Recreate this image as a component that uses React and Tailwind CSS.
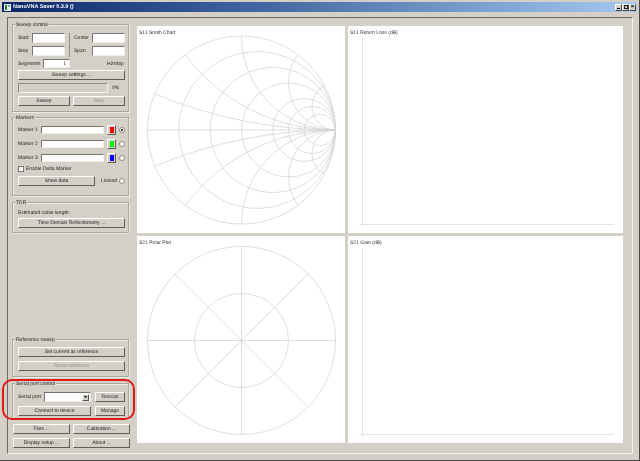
const ff = { fontFamily: '"Liberation Sans",Arial,sans-serif' };

function Btn({ children, className = "", disabled }) {
  return (
    <div className={"flex items-center justify-center pt-[1px] bg-[#d4d0c8] border border-t-white border-l-white border-r-[#5f5d58] border-b-[#5f5d58] text-[5px] leading-none whitespace-nowrap " + (disabled ? "text-[#8f8d88] " : "text-[#222222] ") + className}>
      {children}
    </div>
  );
}
function Input({ className = "", children }) {
  return (
    <div className={"bg-white border border-t-[#77756f] border-l-[#77756f] border-r-[#efeee9] border-b-[#efeee9] text-[5px] leading-none text-[#222222] flex items-center justify-end pt-[1px] pr-[3px] " + className}>
      {children}
    </div>
  );
}
function Group({ title, className = "", children }) {
  return (
    <fieldset className={"border border-[#a9a69c] shadow-[inset_1px_1px_0_#eeece6,1px_1px_0_#eeece6] w-[117px] pl-[5px] pr-[3px] " + className}>
      <legend className="-ml-[3px] px-[1px] translate-y-[1px] bg-[#d4d0c8] text-[5px] leading-[7px] text-[#222222]">{title}</legend>
      {children}
    </fieldset>
  );
}
function Label({ children, className = "" }) {
  return <span className={"pt-[1px] text-[5px] leading-none text-[#222222] whitespace-nowrap " + className}>{children}</span>;
}
function Radio({ on }) {
  return (
    <div className="w-[6px] h-[6px] rounded-full bg-white border border-[#8f8c84] flex items-center justify-center">
      {on && <div className="w-[2px] h-[2px] rounded-full bg-black" />}
    </div>
  );
}
function MarkerRow({ n, color, on }) {
  return (
    <div className="flex items-center h-[10px]">
      <Label className="w-[23px]">Marker {n}</Label>
      <Input className="w-[63px] h-[8px]" />
      <Btn className="w-[9px] h-[10px] ml-[3px] !pt-0">
        <div className={"w-[4px] h-[6px] " + color} />
      </Btn>
      <div className="ml-[3px]"><Radio on={on} /></div>
    </div>
  );
}
const GRID = "#d6d6d6";
function Chart({ title, children }) {
  return (
    <div className="bg-white relative">
      <div className="pl-[2px] pt-[4px] text-[5px] leading-[7px] text-[#333333]">{title}</div>
      {children}
    </div>
  );
}
function Smith() {
  const cx = 104.5, cy = 104, R = 94;
  const res = [5/12, 1/3, 1/4, 1/6, 1/8, 1/12];
  const im = [1, 0.5, 0.2, 2, 4];
  return (
    <svg className="absolute left-0 top-0" width="208" height="207" fill="none" stroke={GRID} strokeWidth="0.8">
      <defs><clipPath id="c"><circle cx={cx} cy={cy} r={R} /></clipPath></defs>
      <circle cx={cx} cy={cy} r={R} />
      <line x1={cx - R} y1={cy} x2={cx + R} y2={cy} />
      {res.map((f) => <circle key={f} cx={cx + R - 2 * R * f} cy={cy} r={2 * R * f} />)}
      <g clipPath="url(#c)">
        {im.map((x) => (
          <g key={x}>
            <circle cx={cx + R} cy={cy - R / x} r={R / x} />
            <circle cx={cx + R} cy={cy + R / x} r={R / x} />
          </g>
        ))}
      </g>
    </svg>
  );
}
function Polar() {
  const cx = 104.5, cy = 104.5, R = 94, d = R * Math.SQRT1_2;
  return (
    <svg className="absolute left-0 top-0" width="208" height="207" fill="none" stroke={GRID} strokeWidth="0.8">
      <circle cx={cx} cy={cy} r={R} />
      <circle cx={cx} cy={cy} r={R / 2} />
      <line x1={cx - R} y1={cy} x2={cx + R} y2={cy} />
      <line x1={cx} y1={cy - R} x2={cx} y2={cy + R} />
      <line x1={cx - d} y1={cy - d} x2={cx + d} y2={cy + d} />
      <line x1={cx - d} y1={cy + d} x2={cx + d} y2={cy - d} />
    </svg>
  );
}
function Axes() {
  return (
    <svg className="absolute left-0 top-0" width="275" height="207" fill="none" stroke="#dedede" strokeWidth="0.8">
      <line x1="14.5" y1="12" x2="14.5" y2="201" />
      <line x1="11" y1="198.5" x2="266" y2="198.5" />
    </svg>
  );
}

export default function App() {
  return (
    <div style={ff} className="relative w-[640px] h-[461px] overflow-hidden bg-[#d4d0c8] border-r border-b border-[#4a4a46] blur-[0.35px] [text-rendering:geometricPrecision]">
      <div className="mx-[2px] mt-[2px] h-[10px] flex items-center bg-gradient-to-r from-[#0a246a] to-[#a6caf0]">
        <svg className="ml-[2px]" width="7" height="7" viewBox="0 0 7 7">
          <rect width="7" height="7" fill="#e8f0e8" />
          <rect x="1" y="1" width="2" height="5" fill="#2f7f4f" />
          <rect x="4" y="1" width="2" height="2" fill="#7fa0c0" />
        </svg>
        <span className="ml-[2px] pt-[1px] text-[5.5px] font-bold leading-none text-white whitespace-nowrap">NanoVNA Saver 0.3.9 ()</span>
        <div className="ml-auto flex mr-[1px]">
          {["min", "max", "close"].map((k) => (
            <div key={k} className="w-[7px] h-[7px] bg-[#d4d0c8] border border-t-white border-l-white border-r-[#444444] border-b-[#444444] flex items-end justify-center">
              {k === "min" && <div className="w-[3px] h-[1px] bg-black mb-[1px]" />}
              {k === "max" && <div className="w-[4px] h-[4px] border border-[#222222] mb-[0.5px]" />}
              {k === "close" && <span className="text-[6px] font-bold leading-[5px] text-black">×</span>}
            </div>
          ))}
        </div>
      </div>

      <div className="ml-[7px] mt-[5px] w-[626px] h-[437px] border border-t-[#6e6c66] border-l-[#6e6c66] border-r-[#f2f1ec] border-b-[#f2f1ec] flex pl-[4px]">
        <div className="w-[118px] h-[427px] mt-[3px] flex flex-col">
          <Group title="Sweep control" className="h-[91px]">
            <div className="flex mt-[5px] h-[23px]">
              <div className="flex flex-col gap-[3px] w-[47px]">
                <div className="flex items-center"><Label className="w-[14px]">Start</Label><Input className="w-[33px] h-[10px]" /></div>
                <div className="flex items-center"><Label className="w-[14px]">Stop</Label><Input className="w-[33px] h-[10px]" /></div>
              </div>
              <div className="ml-[4px] w-[1px] h-[24px] bg-[#8d8a82]" />
              <div className="ml-[4px] flex flex-col gap-[3px] w-[51px]">
                <div className="flex items-center"><Label className="w-[18px]">Center</Label><Input className="w-[33px] h-[10px]" /></div>
                <div className="flex items-center"><Label className="w-[18px]">Span</Label><Input className="w-[33px] h-[10px]" /></div>
              </div>
            </div>
            <div className="flex items-center mt-[3px] h-[9px]">
              <Label className="w-[25px]">Segments</Label>
              <Input className="w-[27px] h-[9px]">1</Input>
              <Label className="ml-auto mr-[1px]">Hz/step</Label>
            </div>
            <Btn className="mt-[2px] h-[10px] w-[107px]">Sweep settings ...</Btn>
            <div className="flex items-center mt-[3px] h-[10px]">
              <div className="w-[90px] h-[10px] bg-[#d4d0c8] border border-t-[#8d8a82] border-l-[#8d8a82] border-r-[#f2f1ec] border-b-[#f2f1ec]" />
              <Label className="ml-[4px]">0%</Label>
            </div>
            <div className="flex gap-[3px] mt-[3px]">
              <Btn className="w-[52px] h-[10px]">Sweep</Btn>
              <Btn disabled className="w-[52px] h-[10px]">Stop</Btn>
            </div>
          </Group>

          <Group title="Markers" className="h-[82px] mt-[2px]">
            <div className="flex flex-col gap-[4px] mt-[4px]">
              <MarkerRow n="1" color="bg-[#ff0000]" on />
              <MarkerRow n="2" color="bg-[#00ff00]" />
              <MarkerRow n="3" color="bg-[#0000ff]" />
            </div>
            <div className="flex items-center mt-[2px] h-[8px]">
              <div className="w-[6px] h-[6px] bg-white border border-[#77756f]" />
              <Label className="ml-[2px]">Enable Delta Marker</Label>
            </div>
            <div className="flex items-center mt-[3px]">
              <Btn className="w-[77px] h-[10px]">Show data</Btn>
              <Label className="ml-[6px] w-[18px]">Locked</Label>
              <Radio />
            </div>
          </Group>

          <Group title="TDR" className="h-[34px] mt-[3px]">
            <div className="mt-[3px] h-[7px] flex items-center"><Label>Estimated cable length:</Label></div>
            <Btn className="mt-[2px] h-[10px] w-[107px]">Time Domain Reflectometry ...</Btn>
          </Group>

          <div className="flex-1" />

          <Group title="Reference sweep" className="h-[41px]">
            <Btn className="mt-[4px] h-[10px] w-[107px]">Set current as reference</Btn>
            <Btn disabled className="mt-[4px] h-[10px] w-[107px]">Reset reference</Btn>
          </Group>

          <Group title="Serial port control" className="h-[39px] mt-[3px]">
            <div className="flex items-center mt-[5px] h-[10px]">
              <Label className="w-[26px]">Serial port</Label>
              <div className="w-[47px] h-[10px] flex items-center justify-end bg-white border border-t-[#77756f] border-l-[#77756f] border-r-[#efeee9] border-b-[#efeee9]">
                <div className="w-[7px] h-[7px] mr-[1px] bg-[#d4d0c8] border border-t-white border-l-white border-r-[#55534e] border-b-[#55534e] flex items-center justify-center">
                  <svg width="3" height="2" viewBox="0 0 3 2"><path d="M0 0H3L1.5 2Z" fill="#000" /></svg>
                </div>
              </div>
              <Btn className="w-[30px] h-[10px] ml-[4px]">Rescan</Btn>
            </div>
            <div className="flex items-center mt-[4px]">
              <Btn className="w-[73px] h-[10px]">Connect to device</Btn>
              <Btn className="w-[30px] h-[10px] ml-[4px]">Manage</Btn>
            </div>
          </Group>

          <div className="ml-[1px] mt-[5px] grid grid-cols-[57px_57px] gap-x-[3px] gap-y-[4px]">
            <Btn className="h-[10px]">Files ...</Btn>
            <Btn className="h-[10px]">Calibration ...</Btn>
            <Btn className="h-[10px]">Display setup ...</Btn>
            <Btn className="h-[10px]">About ...</Btn>
          </div>
        </div>

        <div className="ml-[7px] mt-[8px] grid grid-cols-[208px_275px] grid-rows-[207px_207px] gap-[3px]">
          <Chart title="S11 Smith Chart"><Smith /></Chart>
          <Chart title="S11 Return Loss (dB)"><Axes /></Chart>
          <Chart title="S21 Polar Plot"><Polar /></Chart>
          <Chart title="S21 Gain (dB)"><Axes /></Chart>
        </div>
      </div>

      <div className="absolute left-[2px] top-[379px] w-[133px] h-[41px] rounded-[10px] border-2 border-[#e01818]" />
    </div>
  );
}
